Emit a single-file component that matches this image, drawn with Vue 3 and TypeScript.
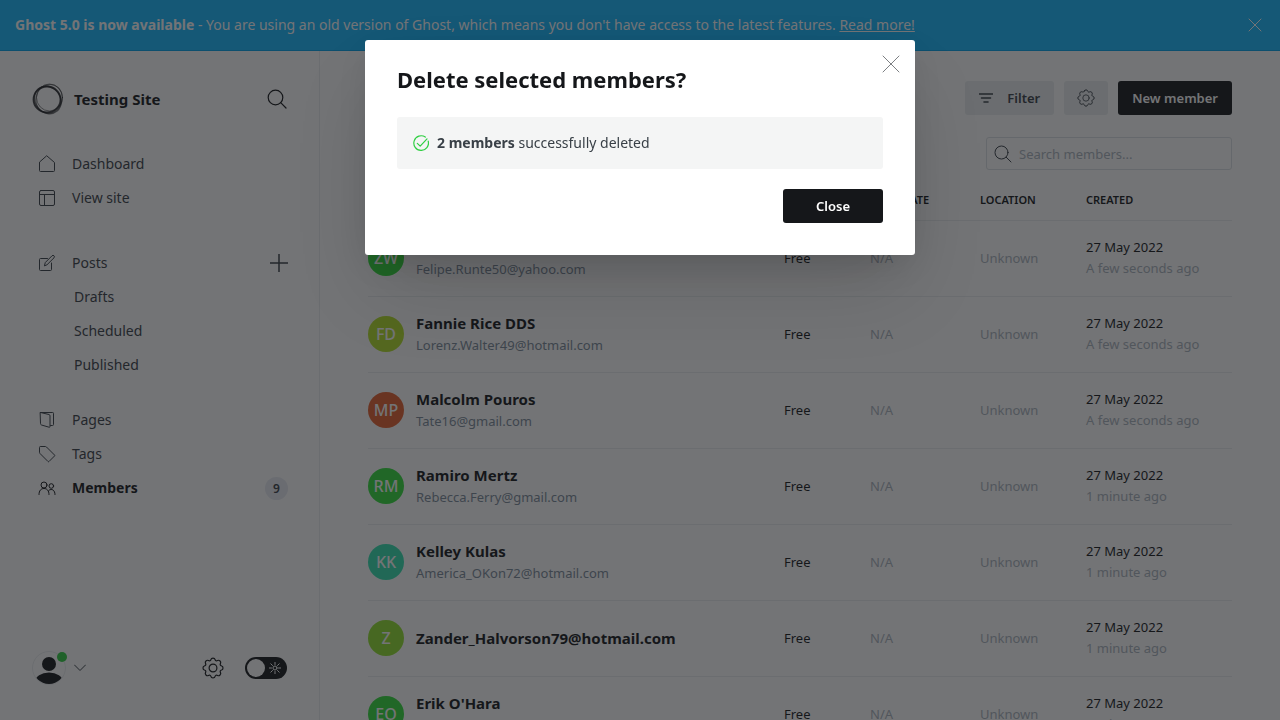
<script setup lang="ts">
import { ref } from 'vue'

interface Member {
  initials: string
  name: string
  email: string
  color: string
  created: string
}

const search = ref('')
const darkMode = ref(false)

const members: Member[] = [
  { initials: 'ZW', name: 'ZW', email: 'Felipe.Runte50@yahoo.com', color: '#32df3a', created: 'A few seconds ago' },
  { initials: 'FD', name: 'Fannie Rice DDS', email: 'Lorenz.Walter49@hotmail.com', color: '#b4e128', created: 'A few seconds ago' },
  { initials: 'MP', name: 'Malcolm Pouros', email: 'Tate16@gmail.com', color: '#e6602e', created: 'A few seconds ago' },
  { initials: 'RM', name: 'Ramiro Mertz', email: 'Rebecca.Ferry@gmail.com', color: '#32df3a', created: '1 minute ago' },
  { initials: 'KK', name: 'Kelley Kulas', email: 'America_OKon72@hotmail.com', color: '#32e2b0', created: '1 minute ago' },
  { initials: 'Z', name: 'Zander_Halvorson79@hotmail.com', email: '', color: '#92e12e', created: '1 minute ago' },
  { initials: 'EO', name: "Erik O'Hara", email: 'Clemens.Al@gmail.com', color: '#32df3a', created: '1 minute ago' },
]
</script>

<template>
  <div class="app">
    <div class="banner">
      <p><strong>Ghost 5.0 is now available</strong> - You are using an old version of Ghost, which means you don't have access to the latest features. <a href="#">Read more!</a></p>
      <button class="plain" aria-label="Dismiss">
        <svg width="14" height="14" viewBox="0 0 14 14"><path d="M1 1l12 12M13 1L1 13" /></svg>
      </button>
    </div>

    <div class="body">
      <aside class="sidebar">
        <header class="site">
          <svg class="logo" width="32" height="32" viewBox="0 0 32 32">
            <ellipse cx="15" cy="16.500" rx="13.500" ry="13" stroke-width="1.800" opacity=".8" />
            <ellipse cx="17.500" cy="14.500" rx="13" ry="13.500" stroke-width="1" opacity=".5" />
            <ellipse cx="16.500" cy="16.800" rx="14.500" ry="12.500" stroke-width="1.500" opacity=".6" transform="rotate(50 16 16)" />
            <ellipse cx="15.500" cy="15" rx="14.500" ry="13" stroke-width="1.200" opacity=".5" transform="rotate(110 16 16)" />
          </svg>
          <span class="site-name">Testing Site</span>
          <button class="plain" aria-label="Search">
            <svg width="20" height="20" viewBox="0 0 20 20" class="dark"><circle cx="8.500" cy="8.500" r="7.300" /><path d="M13.700 13.700L19 19" /></svg>
          </button>
        </header>

        <nav>
          <ul>
            <li><a href="#"><svg width="18" height="18" viewBox="0 0 18 18"><path d="M1.500 7.500v8q0 1 1 1h13q1 0 1-1v-8L9 1z" /></svg>Dashboard</a></li>
            <li><a href="#"><svg width="18" height="18" viewBox="0 0 18 18"><rect x="1.500" y="1.500" width="15" height="15" rx="1.500" /><path d="M1.500 5.500h15M6.500 5.500v11" /></svg>View site</a></li>
          </ul>
          <ul>
            <li class="with-action">
              <a href="#"><svg width="18" height="18" viewBox="0 0 18 18"><path d="M9.500 4.500h-7q-1 0-1 1v10q0 1 1 1h10q1 0 1-1V9M6.500 11.500l.8-3L14 1.800q1-1 2 0t0 2L9.300 10.500z" /></svg>Posts</a>
              <button class="plain" aria-label="New post"><svg width="18" height="18" viewBox="0 0 18 18"><path d="M9 0v18M0 9h18" stroke-width="1.500" /></svg></button>
            </li>
            <li class="sub"><a href="#">Drafts</a></li>
            <li class="sub"><a href="#">Scheduled</a></li>
            <li class="sub"><a href="#">Published</a></li>
          </ul>
          <ul>
            <li><a href="#"><svg width="18" height="18" viewBox="0 0 18 18"><path d="M2.500 1.500h12.200q.8 0 .8.800v11.200q0 1-1 1h-2M2.500 1.500l8.500 2q1 .3 1 1.300v10.700q0 1-1 .7l-7.500-2.200q-1-.3-1-1.300z" /></svg>Pages</a></li>
            <li><a href="#"><svg width="18" height="18" viewBox="0 0 18 18"><path d="M1.500 2.200q0-.7.700-.7h5.300q.5 0 1 .5l8 8q.5.500 0 1l-5.500 5.500q-.5.500-1 0l-8-8q-.5-.5-.5-1z" /></svg>Tags</a></li>
            <li class="active"><a href="#"><svg width="18" height="18" viewBox="0 0 18 18"><circle cx="6" cy="6" r="3" /><circle cx="13.300" cy="7" r="2.300" /><path d="M1 15.500c0-4 2-6 5-6s5 2 5 6M11 11.200c3-2 6 0 6 4.300" /></svg>Members</a><span class="count">9</span></li>
          </ul>
        </nav>

        <footer>
          <button class="plain user" aria-label="Account">
            <span class="avatar-user">
              <svg width="34" height="34" viewBox="0 0 34 34"><defs><clipPath id="user-clip"><circle cx="17" cy="17" r="16" /></clipPath></defs><circle cx="17" cy="17" r="16.500" stroke="#ebeef0" /><g clip-path="url(#user-clip)" fill="#15171a" stroke="none"><circle cx="17" cy="13" r="7" /><ellipse cx="17" cy="31" rx="14" ry="9.500" /></g></svg>
              <span class="online"></span>
            </span>
            <svg width="12" height="8" viewBox="0 0 12 8"><path d="M.5 1L6 6.500 11.500 1" /></svg>
          </button>
          <button class="plain settings" aria-label="Settings">
            <svg width="22" height="22" viewBox="0 0 22 22" class="dark"><circle cx="11" cy="11" r="3.900" /><path d="M9 2.300C9.400.6 12.600.6 13 2.300c.4 1.500 1.300 1.900 2.600 1.200 1.700-.9 3.800 1.200 2.900 2.900-.7 1.300-.3 2.200 1.200 2.600 1.700.4 1.700 3.600 0 4-1.500.4-1.900 1.300-1.200 2.600.9 1.700-1.200 3.800-2.900 2.900-1.300-.7-2.200-.3-2.600 1.200-.4 1.700-3.600 1.700-4 0-.4-1.500-1.300-1.900-2.600-1.200-1.700.9-3.800-1.200-2.900-2.900.7-1.300.3-2.200-1.200-2.600-1.700-.4-1.700-3.600 0-4 1.500-.4 1.900-1.300 1.200-2.600-.9-1.700 1.200-3.800 2.900-2.900 1.300.7 2.200.3 2.600-1.200z" /></svg>
          </button>
          <label class="toggle">
            <input v-model="darkMode" type="checkbox" aria-label="Night shift" />
            <span class="knob"></span>
            <svg width="12" height="12" viewBox="0 0 12 12"><circle cx="6" cy="6" r="2" /><path d="M6 0v2.500M6 9.500V12M0 6h2.500M9.500 6H12M1.800 1.800l1.700 1.700M8.500 8.500l1.700 1.700M10.200 1.800L8.500 3.500M3.500 8.500l-1.700 1.700" /></svg>
          </label>
        </footer>
      </aside>

      <main>
        <div class="actions">
          <button class="btn filter"><svg width="14" height="10" viewBox="0 0 14 10"><path d="M.5 1h13M2.500 5h9M5 9h4" stroke-width="1.600" /></svg>Filter</button>
          <button class="btn gear" aria-label="Member actions">
            <svg width="18" height="18" viewBox="0 0 22 22"><circle cx="11" cy="11" r="3.900" /><path d="M9 2.300C9.400.6 12.600.6 13 2.300c.4 1.500 1.300 1.900 2.600 1.200 1.700-.9 3.800 1.200 2.900 2.900-.7 1.300-.3 2.200 1.200 2.600 1.700.4 1.700 3.600 0 4-1.500.4-1.900 1.300-1.200 2.600.9 1.700-1.200 3.800-2.900 2.900-1.300-.7-2.200-.3-2.600 1.200-.4 1.700-3.600 1.700-4 0-.4-1.500-1.300-1.900-2.600-1.200-1.700.9-3.800-1.200-2.900-2.900.7-1.300.3-2.200-1.200-2.600-1.700-.4-1.700-3.600 0-4 1.500-.4 1.900-1.300 1.200-2.600-.9-1.700 1.200-3.800 2.900-2.900 1.300.7 2.200.3 2.600-1.200z" stroke-width="1.200" /></svg>
          </button>
          <button class="btn primary">New member</button>
        </div>
        <label class="search">
          <svg width="18" height="18" viewBox="0 0 18 18"><circle cx="7.500" cy="7.500" r="6.500" /><path d="M12.200 12.200L17 17" /></svg>
          <input v-model="search" type="text" placeholder="Search members..." aria-label="Search members" />
        </label>

        <table>
          <colgroup><col /><col class="c-status" /><col class="c-rate" /><col class="c-location" /><col class="c-created" /></colgroup>
          <thead>
            <tr><th>Members</th><th>Status</th><th>Open rate</th><th>Location</th><th>Created</th></tr>
          </thead>
          <tbody>
            <tr v-for="m in members" :key="m.name">
              <td>
                <div class="member">
                  <span class="avatar" :style="{ backgroundColor: m.color }">{{ m.initials }}</span>
                  <div>
                    <h3>{{ m.name }}</h3>
                    <p v-if="m.email">{{ m.email }}</p>
                  </div>
                </div>
              </td>
              <td>Free</td>
              <td class="muted">N/A</td>
              <td class="muted">Unknown</td>
              <td class="created"><div>27 May 2022</div><div class="muted">{{ m.created }}</div></td>
            </tr>
          </tbody>
        </table>
      </main>
    </div>

    <div class="overlay">
      <section class="modal" role="dialog" aria-modal="true" aria-labelledby="modal-title">
        <button class="plain modal-x" aria-label="Close dialog">
          <svg width="18" height="18" viewBox="0 0 18 18"><path d="M1 1l16 16M17 1L1 17" /></svg>
        </button>
        <h1 id="modal-title">Delete selected members?</h1>
        <div class="result">
          <svg width="16" height="16" viewBox="0 0 16 16"><path d="M15.200 6.200A7.300 7.300 0 1 1 12.300 2.100M4.300 8.300l2.900 2.900L14 3.900" /></svg>
          <p><strong>2 members</strong> successfully deleted</p>
        </div>
        <button class="btn close">Close</button>
      </section>
    </div>
  </div>
</template>

<style>
body {
  margin: 0;
}
</style>

<style scoped>
.app,
.app * {
  box-sizing: border-box;
}
.app {
  display: flex;
  flex-direction: column;
  height: 100vh;
  overflow: hidden;
  background: #fff;
  color: #15171a;
  font-family: 'Noto Sans', 'Open Sans', sans-serif;
  font-size: 13px;
  line-height: 20px;
}
p,
h1,
h3,
ul {
  margin: 0;
  padding: 0;
}
ul {
  list-style: none;
}
a {
  color: inherit;
  text-decoration: none;
}
svg {
  display: block;
  flex: none;
  fill: none;
  stroke: currentColor;
  stroke-width: 1;
  stroke-linecap: round;
  stroke-linejoin: round;
}
button,
input {
  font: inherit;
  color: inherit;
}
.plain {
  padding: 0;
  border: 0;
  background: none;
}
.banner {
  display: flex;
  flex: none;
  align-items: center;
  justify-content: space-between;
  height: 51px;
  padding: 0 18px 0 15px;
  border-bottom: 1px solid #00a4eb;
  background: #14b8ff;
  color: #fff;
  font-size: 14px;
}
.banner a {
  text-decoration: underline;
}
.body {
  display: flex;
  flex: 1;
  min-height: 0;
}
.sidebar {
  display: flex;
  flex: none;
  flex-direction: column;
  width: 320px;
  padding: 32px 32px 35px;
  border-right: 1px solid #ebeef0;
  color: #394047;
}
.site {
  display: flex;
  align-items: center;
  margin-bottom: 32px;
  color: #15171a;
}
.logo {
  color: #15171a;
}
.site-name {
  flex: 1;
  margin-left: 10px;
  font-size: 15px;
  font-weight: 700;
}
.dark {
  color: #15171a;
  stroke-width: 1.2;
}
nav {
  flex: 1;
  margin-right: -1px;
  font-size: 14px;
}
nav ul {
  margin-bottom: 31px;
}
nav ul + ul {
  margin-bottom: 21px;
}
nav li {
  display: flex;
  align-items: center;
  height: 34px;
}
nav li a {
  display: flex;
  flex: 1;
  align-items: center;
  gap: 16px;
  padding-left: 6px;
}
nav .sub a {
  padding-left: 42px;
}
.active {
  color: #15171a;
  font-weight: 700;
}
.count {
  width: 23px;
  border-radius: 12px;
  background: #e8ebf2;
  color: #394047;
  font-size: 12px;
  font-weight: 600;
  line-height: 23px;
  text-align: center;
}
footer {
  display: flex;
  align-items: center;
}
.user {
  display: flex;
  align-items: center;
  gap: 8px;
  margin-right: auto;
}
.avatar-user {
  position: relative;
}
.online {
  position: absolute;
  top: 1px;
  right: -1px;
  width: 10px;
  height: 10px;
  border-radius: 50%;
  background: #30cf43;
}
.settings {
  margin-right: 21px;
}
.toggle {
  display: flex;
  position: relative;
  align-items: center;
  justify-content: space-between;
  width: 42px;
  height: 22px;
  padding: 0 6px 0 2px;
  border-radius: 11px;
  background: #15171a;
  color: #fff;
}
.toggle input {
  position: absolute;
  inset: 0;
  width: 100%;
  height: 100%;
  margin: 0;
  opacity: 0;
}
.knob {
  width: 18px;
  height: 18px;
  border-radius: 50%;
  background: #fff;
}
main {
  flex: 1;
  min-width: 0;
  padding: 30px 48px 0;
  overflow: hidden;
}
.actions {
  display: flex;
  justify-content: flex-end;
  gap: 10px;
}
.btn {
  display: flex;
  align-items: center;
  justify-content: center;
  height: 34px;
  padding: 0 14px;
  border: 0;
  border-radius: 3px;
  background: #ebeef0;
  color: #394047;
  font-size: 13px;
  font-weight: 600;
}
.filter {
  gap: 14px;
}
.gear {
  width: 44px;
  padding: 0;
}
.btn.primary,
.btn.close {
  background: #15171a;
  color: #fff;
}
.search {
  display: flex;
  align-items: center;
  gap: 7px;
  width: 246px;
  height: 33px;
  margin: 22px 0 0 auto;
  padding: 0 7px;
  border: 1px solid #dde1e5;
  border-radius: 3px;
  color: #394047;
}
.search input {
  flex: 1;
  min-width: 0;
  padding: 0;
  border: 0;
  outline: 0;
  background: none;
}
.search input::placeholder {
  color: #abb4be;
  opacity: 1;
}
table {
  width: 100%;
  margin-top: 10px;
  border-collapse: collapse;
  table-layout: fixed;
}
.c-status {
  width: 86px;
}
.c-rate {
  width: 110px;
}
.c-location {
  width: 106px;
}
.c-created {
  width: 146px;
}
th {
  height: 40px;
  padding: 0;
  border-bottom: 1px solid #ebeef0;
  font-size: 11px;
  font-weight: 600;
  text-align: left;
  text-transform: uppercase;
  white-space: nowrap;
}
td {
  height: 76px;
  padding: 0;
  border-bottom: 1px solid #ebeef0;
  white-space: nowrap;
}
.muted {
  color: #abb4be;
}
.created {
  line-height: 21px;
}
.member {
  display: flex;
  align-items: center;
  gap: 12px;
}
.avatar {
  width: 36px;
  height: 36px;
  border-radius: 50%;
  color: #fff;
  font-size: 16px;
  font-weight: 500;
  line-height: 36px;
  text-align: center;
}
.member h3 {
  font-size: 15px;
  font-weight: 700;
  line-height: 22px;
}
.member p {
  padding-top: 1px;
  color: #7c8b9a;
  line-height: 21px;
}
.overlay {
  display: flex;
  position: fixed;
  inset: 0;
  align-items: flex-start;
  justify-content: center;
  padding: 40px 20px;
  background: rgba(21, 23, 26, 0.6);
}
.modal {
  display: flex;
  position: relative;
  flex-direction: column;
  width: 100%;
  max-width: 550px;
  padding: 24px 32px 32px;
  border-radius: 3px;
  background: #fff;
  box-shadow: 0 40px 80px -10px rgba(0, 0, 0, 0.15), 0 12px 32px -8px rgba(0, 0, 0, 0.15);
}
.modal-x {
  position: absolute;
  top: 15px;
  right: 15px;
  color: #7c7f82;
}
h1 {
  font-size: 22px;
  font-weight: 700;
  line-height: 30px;
}
.result {
  display: flex;
  align-items: center;
  gap: 8px;
  height: 52px;
  margin: 23px 0 20px;
  padding: 0 16px;
  border-radius: 3px;
  background: #f4f5f5;
  color: #394047;
  font-size: 14px;
}
.result svg {
  color: #30cf43;
  stroke-width: 1.2;
}
.close {
  align-self: flex-end;
  width: 100px;
}
</style>
